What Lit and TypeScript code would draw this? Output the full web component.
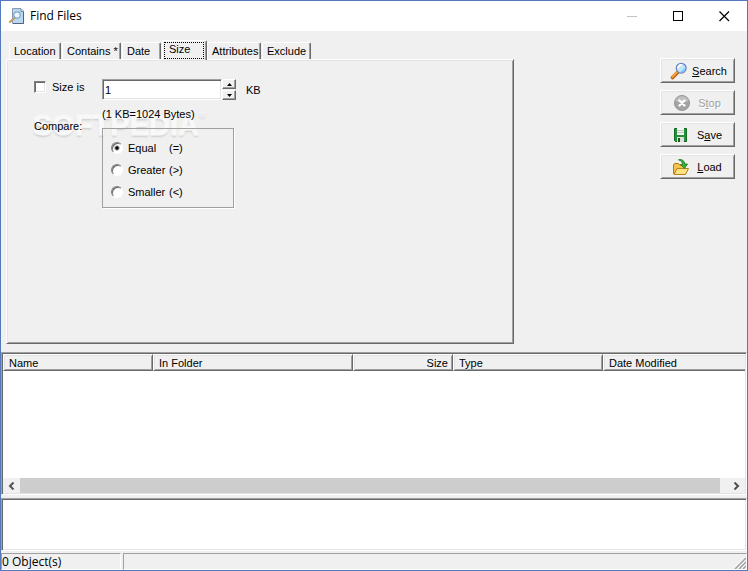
import { LitElement, html, css, svg } from "lit";
import { customElement, property, state } from "lit/decorators.js";

const icons: Record<string, unknown> = {
  search: svg`
    <path d="M2.500 15.500 L7.500 10.500" stroke="#b5560f" stroke-width="3.600" stroke-linecap="round"/>
    <path d="M2.300 15 L7 10.300" stroke="#fba23a" stroke-width="2" stroke-linecap="round"/>
    <circle cx="11.200" cy="6.200" r="4.900" fill="#bfe6fb" stroke="#6a84c2" stroke-width="1.300"/>
    <path d="M8 6.500 A3.400 3.400 0 0 1 12 3" stroke="#fff" stroke-width="1.800" fill="none"/>
    <path d="M14.500 6.500 A3.400 3.400 0 0 1 11 9.600" stroke="#74c4f2" stroke-width="1.400" fill="none"/>`,
  stop: svg`
    <circle cx="12" cy="9" r="7.600" fill="#a3a3a3" stroke="#8f8f8f" stroke-width="0.800"/>
    <path d="M5.500 7 A6.800 6.800 0 0 1 18.500 7 Q12 9.500 5.500 7Z" fill="#c0c0c0"/>
    <path d="M9.500 6.500 L14.500 11.500 M14.500 6.500 L9.500 11.500" stroke="#fff" stroke-width="2.400" stroke-linecap="round"/>`,
  save: svg`
    <path d="M4.500 2.500 H16.500 V15.500 H5.500 L4.500 14.500Z" fill="#23923a" stroke="#126b22"/>
    <rect x="7" y="2" width="7" height="7" fill="#f4f4f4"/>
    <path d="M7 4.500 H14 M7 6.500 H14" stroke="#c0c4c0"/>
    <rect x="7" y="11" width="7" height="5" fill="#dedede"/>
    <rect x="8" y="12" width="2" height="4" fill="#155f1f"/>`,
  load: svg`
    <path d="M3.500 15.500 V7 L4.500 5.500 H8.500 L10 7.500 H14.500 V15.500Z" fill="#f3c24a" stroke="#b47a12"/>
    <path d="M4 16.500 L7 10.500 H18.500 L15.500 16.500Z" fill="#ffe084" stroke="#b9821a"/>
    <path d="M8.500 1.800 C12 0.800 14.600 3 14.800 6 H17.500 L14.500 10.500 L10.500 6.500 H12.500 C12.500 4 11 2.500 8.500 1.800Z" fill="#3aae3a" stroke="#157a1b" stroke-width="0.800"/>`,
};

@customElement("command-button")
class CommandButton extends LitElement {
  @property() label = "";
  @property() icon = "";
  @property({ type: Number }) accel = 0;
  @property({ type: Boolean }) disabled = false;

  static styles = css`
    :host { display: block; }
    .command {
      display: flex;
      align-items: center;
      box-sizing: border-box;
      width: 75px;
      height: 25px;
      margin: 0;
      padding: 0 5px 0 9px;
      border: 1px solid;
      border-color: #fff #696969 #696969 #fff;
      box-shadow: inset 1px 1px 0 #e3e3e3, inset -1px -1px 0 #a0a0a0;
      background: #f0f0f0;
      color: #000;
      font: 11px/14px "Liberation Sans", Arial, sans-serif;
    }
    .command:disabled { color: #a0a0a0; text-shadow: 1px 1px 0 #fff; }
    .icon { flex: none; width: 20px; height: 18px; fill: none; }
    .text { flex: 1; text-align: center; white-space: nowrap; }
  `;

  render() {
    const { label, accel } = this;
    return html`<button class="command" type="button" ?disabled=${this.disabled}>
      <svg class="icon" viewBox="0 0 20 18" aria-hidden="true">${icons[this.icon]}</svg>
      <span class="text">${label.slice(0, accel)}<u>${label[accel]}</u>${label.slice(accel + 1)}</span>
    </button>`;
  }
}

@customElement("app-root")
class AppRoot extends LitElement {
  @state() private tab = "Size";
  @state() private compare = "equal";
  @state() private amount = 1;

  private tabs = ["Location", "Contains *", "Date", "Size", "Attributes", "Exclude"];
  private comparisons = [
    { id: "equal", name: "Equal", sign: "(=)" },
    { id: "greater", name: "Greater", sign: "(>)" },
    { id: "smaller", name: "Smaller", sign: "(<)" },
  ];

  static styles = css`
    :host {
      display: flex;
      flex-direction: column;
      box-sizing: border-box;
      min-height: 100vh;
      border: 1px solid #5478bd;
      background: #f0f0f0;
      color: #000;
      font: 11px/14px "Liberation Sans", Arial, sans-serif;
    }
    button, input { font: inherit; color: inherit; margin: 0; }

    .titlebar { display: flex; align-items: center; height: 30px; padding-left: 8px; background: #fff; }
    .app-icon { width: 16px; height: 16px; margin-right: 5px; }
    .title { flex: 1; margin: 0; font: 12px/16px "Open Sans", "Noto Sans", sans-serif; }
    .caption { width: 46px; height: 30px; padding: 0; border: 0; background: none; }
    .glyph { display: block; width: 11px; height: 11px; margin: 0 auto; fill: none; stroke: #000; }
    .glyph.dim { stroke: #c4c4c4; }

    .form { display: flex; align-items: flex-start; padding: 9px 12px 8px 5px; }
    .book { width: 508px; flex: 0 1 508px; }
    .tabs {
      display: grid;
      grid-template-columns: 53px 60px 40px 45px 55px 50px;
      align-items: end;
      height: 19px;
      padding-left: 3px;
    }
    .tab {
      height: 17px;
      margin-right: 1px;
      padding: 0 0 0 4px;
      border: 1px solid;
      border-color: #fff #696969 transparent #fff;
      border-bottom: 0;
      border-radius: 2px 2px 0 0;
      box-shadow: inset -1px 0 0 #a0a0a0;
      background: #f0f0f0;
      text-align: left;
      white-space: nowrap;
    }
    .tab.selected {
      position: relative;
      z-index: 1;
      height: 20px;
      margin: 0 0 -1px;
      padding: 1px 2px 1px 1px;
    }
    .tab.selected .tab-text {
      display: block;
      height: 15px;
      padding-left: 4px;
      border: 1px dotted #000;
      line-height: 13px;
    }
    .tab-text { display: block; }
    .panel {
      position: relative;
      isolation: isolate;
      display: flex;
      box-sizing: border-box;
      min-height: 285px;
      padding: 19px 26px 19px 27px;
      border: 1px solid;
      border-color: #fff #696969 #696969 #fff;
      box-shadow: inset 1px 1px 0 #e3e3e3, inset -1px -1px 0 #a0a0a0;
    }
    .labels { display: flex; flex-direction: column; gap: 25px; width: 68px; padding-top: 1px; }
    .check { display: flex; align-items: center; gap: 6px; }
    .box {
      appearance: none;
      box-sizing: border-box;
      width: 12px;
      height: 12px;
      border: 1px solid;
      border-color: #808080 #fff #fff #808080;
      box-shadow: inset 1px 1px 0 #696969, inset -1px -1px 0 #e3e3e3;
      background: #fff;
    }
    .box:checked { background: #000; background-clip: content-box; padding: 3px; }
    .fields { display: flex; flex-direction: column; align-items: flex-start; }
    .amount { display: flex; align-items: center; height: 21px; }
    .number {
      box-sizing: border-box;
      width: 120px;
      height: 21px;
      padding: 0 2px;
      border: 1px solid;
      border-color: #a0a0a0 #fff #fff #a0a0a0;
      border-radius: 0;
      box-shadow: inset 1px 1px 0 #696969, inset -1px -1px 0 #e3e3e3;
      background: #fff;
      outline: 0;
    }
    .spinner { display: flex; flex-direction: column; gap: 1px; width: 14px; margin-right: 10px; }
    .step {
      height: 10px;
      padding: 0;
      border: 1px solid;
      border-color: #fff #696969 #696969 #fff;
      box-shadow: inset -1px -1px 0 #a0a0a0;
      background: #f0f0f0;
      line-height: 0;
    }
    .arrow { display: block; width: 5px; height: 3px; margin: 0 auto; }
    .hint { margin: 7px 0; }
    .group {
      box-sizing: border-box;
      width: 132px;
      min-width: 0;
      margin: 0;
      padding: 8px 0 4px 8px;
      border: 1px solid #a0a0a0;
      box-shadow: 1px 1px 0 #fff;
    }
    .choice { display: flex; align-items: center; height: 22px; }
    .radio {
      appearance: none;
      box-sizing: border-box;
      width: 12px;
      height: 12px;
      margin-right: 5px;
      border: 1px solid;
      border-color: #808080 #fff #fff #808080;
      border-radius: 6px;
      box-shadow: inset 1px 1px 0 #696969;
      background: #fff;
    }
    .radio:checked { background: radial-gradient(circle, #000 1px, #fff 3px); }
    .choice-name { min-width: 39px; margin-right: 2px; }
    .watermark {
      position: absolute;
      z-index: -1;
      left: 26px;
      top: 48px;
      color: #f8f8f8;
      -webkit-text-stroke: 1px #f8f8f8;
      font-size: 29px;
      font-weight: bold;
      line-height: 34px;
      text-shadow: 0 2px 2px rgba(0, 0, 0, 0.14);
      pointer-events: none;
    }
    .mark { -webkit-text-stroke: 0; font-size: 9px; vertical-align: top; line-height: 14px; }
    .commands { display: flex; flex-direction: column; gap: 7px; margin-left: auto; padding-top: 18px; }

    .sunken {
      border: 1px solid;
      border-color: #a0a0a0 #fff #fff #a0a0a0;
      box-shadow: inset 1px 1px 0 #696969, inset -1px -1px 0 #e3e3e3;
      background: #fff;
      padding: 1px;
    }
    .results { display: flex; flex: 1; flex-direction: column; min-height: 120px; margin: 0 0 3px; }
    .table { width: 100%; border-spacing: 0; table-layout: fixed; }
    .c-name, .c-type { width: 150px; }
    .c-folder { width: 200px; }
    .c-size { width: 100px; }
    .head {
      box-sizing: border-box;
      height: 17px;
      padding: 0 4px 0 5px;
      border: 1px solid;
      border-color: #fff #696969 #696969 #fff;
      box-shadow: inset 1px 1px 0 #e3e3e3, inset -1px -1px 0 #a0a0a0;
      background: #f0f0f0;
      font-weight: normal;
      text-align: left;
      white-space: nowrap;
    }
    .head.end { text-align: right; }
    .head:last-child { border-right: 0; box-shadow: inset 1px 1px 0 #e3e3e3, inset 0 -1px 0 #a0a0a0; }
    .scroll { display: flex; height: 15px; margin-top: auto; background: #f0f0f0; }
    .scroll-button { width: 17px; height: 15px; padding: 0; border: 0; background: none; }
    .chevron { display: block; width: 7px; height: 8px; margin: 0 auto; fill: none; stroke: #505050; stroke-width: 2; }
    .thumb { flex: 1; margin-right: 8px; background: #cdcdcd; }
    .details { height: 49px; margin-bottom: 2px; }

    .status { display: flex; gap: 2px; height: 17px; }
    .cell {
      border: 1px solid;
      border-color: #a0a0a0 #fff #fff #a0a0a0;
      font: 12px/15px "Open Sans", "Noto Sans", sans-serif;
      white-space: nowrap;
    }
    .cell.count { width: 118px; }
    .cell.rest { flex: 1; display: flex; justify-content: flex-end; align-items: flex-end; }
    .grip { width: 12px; height: 12px; fill: none; }
  `;

  private step(by: number) {
    this.amount = Math.max(0, this.amount + by);
  }

  render() {
    return html`
      <header class="titlebar">
        <svg class="app-icon" viewBox="0 0 16 16" aria-hidden="true">
          <path d="M3.500 .5 H12 L14.500 3 V15.500 H3.500Z" fill="#b9d7f0" stroke="#8599b0" />
          <path d="M12 1 V3.500 H14.500" fill="#fff" stroke="#7187a1" />
          <path d="M14.500 4 V15.500 H4" fill="none" stroke="#53657c" />
          <path d="M1 14 L6 9.500" stroke="#c39a5c" stroke-width="2" stroke-linecap="round" />
          <circle cx="8" cy="7" r="3.200" fill="#e9f7ff" stroke="#7fa6cc" stroke-width="1.200" />
        </svg>
        <h1 class="title">Find Files</h1>
        <button class="caption" aria-label="Minimize" disabled>
          <svg class="glyph dim" viewBox="0 0 11 11"><path d="M0 5.500 H10" /></svg>
        </button>
        <button class="caption" aria-label="Maximize">
          <svg class="glyph" viewBox="0 0 11 11"><rect x=".5" y=".5" width="9" height="9" /></svg>
        </button>
        <button class="caption" aria-label="Close">
          <svg class="glyph" viewBox="0 0 11 11"><path d="M.5 .5 L10 10 M10 .5 L.5 10" stroke-width="1.200" /></svg>
        </button>
      </header>

      <main class="form">
        <section class="book">
          <div class="tabs" role="tablist">
            ${this.tabs.map(
              (name) => html`<button
                class="tab ${name === this.tab ? "selected" : ""}"
                role="tab"
                aria-selected=${name === this.tab}
                @click=${() => (this.tab = name)}
              ><span class="tab-text">${name}</span></button>`
            )}
          </div>
          <div class="panel" role="tabpanel">
            <div class="watermark" aria-hidden="true">SOFTPEDIA<span class="mark">®</span></div>
            <div class="labels">
              <label class="check"><input class="box" type="checkbox" />Size is</label>
              <span id="compare">Compare:</span>
            </div>
            <div class="fields">
              <div class="amount">
                <input
                  class="number"
                  type="text"
                  aria-label="Size in kilobytes"
                  .value=${String(this.amount)}
                  @change=${(e: Event) => (this.amount = Number((e.target as HTMLInputElement).value) || 0)}
                />
                <span class="spinner">
                  <button class="step" aria-label="Increase" @click=${() => this.step(1)}>
                    <svg class="arrow" viewBox="0 0 5 3"><path d="M0 3 L2.500 0 L5 3Z" /></svg>
                  </button>
                  <button class="step" aria-label="Decrease" @click=${() => this.step(-1)}>
                    <svg class="arrow" viewBox="0 0 5 3"><path d="M0 0 L2.500 3 L5 0Z" /></svg>
                  </button>
                </span>
                <span>KB</span>
              </div>
              <p class="hint">(1 KB=1024 Bytes)</p>
              <fieldset class="group" aria-labelledby="compare">
                ${this.comparisons.map(
                  (c) => html`<label class="choice">
                    <input
                      class="radio"
                      type="radio"
                      name="compare"
                      .checked=${c.id === this.compare}
                      @change=${() => (this.compare = c.id)}
                    />
                    <span class="choice-name">${c.name}</span><span>${c.sign}</span>
                  </label>`
                )}
              </fieldset>
            </div>
          </div>
        </section>
        <nav class="commands" aria-label="Commands">
          <command-button label="Search" icon="search"></command-button>
          <command-button label="Stop" icon="stop" accel="1" disabled></command-button>
          <command-button label="Save" icon="save" accel="1"></command-button>
          <command-button label="Load" icon="load"></command-button>
        </nav>
      </main>

      <section class="results sunken">
        <table class="table">
          <thead>
            <tr>
              <th class="head c-name" scope="col">Name</th>
              <th class="head c-folder" scope="col">In Folder</th>
              <th class="head c-size end" scope="col">Size</th>
              <th class="head c-type" scope="col">Type</th>
              <th class="head" scope="col">Date Modified</th>
            </tr>
          </thead>
          <tbody></tbody>
        </table>
        <div class="scroll">
          <button class="scroll-button" aria-label="Scroll left">
            <svg class="chevron" viewBox="0 0 7 8"><path d="M5.500 .5 L2 4 L5.500 7.500" /></svg>
          </button>
          <div class="thumb"></div>
          <button class="scroll-button" aria-label="Scroll right">
            <svg class="chevron" viewBox="0 0 7 8"><path d="M1.500 .5 L5 4 L1.500 7.500" /></svg>
          </button>
        </div>
      </section>
      <section class="details sunken"></section>

      <footer class="status">
        <div class="cell count">0 Object(s)</div>
        <div class="cell rest">
          <svg class="grip" viewBox="0 0 12 12" aria-hidden="true">
            <path d="M0 11 L11 0 M4 11 L11 4 M8 11 L11 8" stroke="#fff" />
            <path d="M1 12 L12 1 M5 12 L12 5 M9 12 L12 9" stroke="#a0a0a0" stroke-width="1.500" />
          </svg>
        </div>
      </footer>
    `;
  }
}
